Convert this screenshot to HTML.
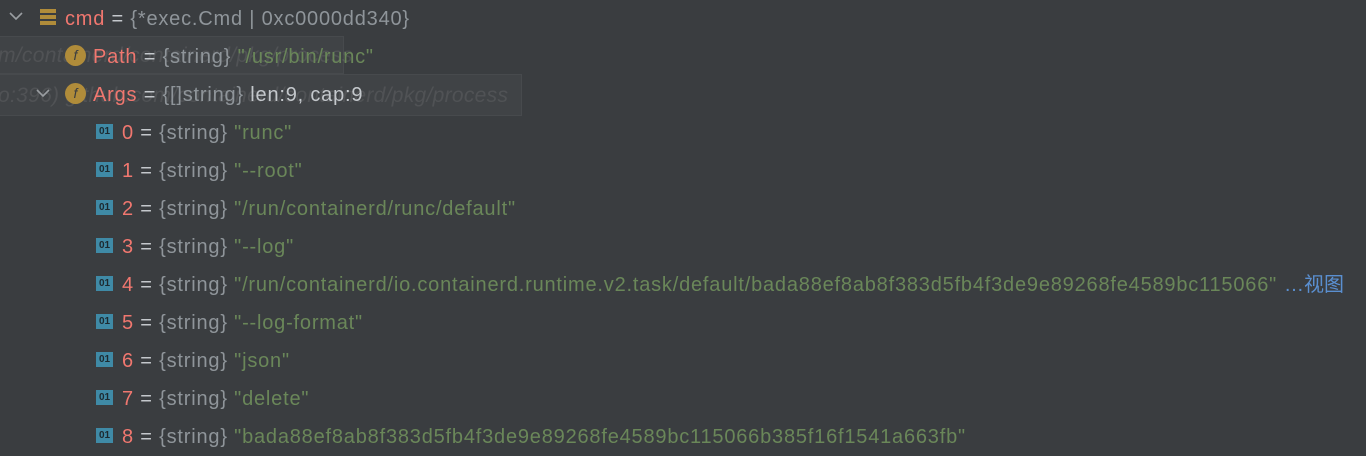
<!DOCTYPE html>
<html><head><meta charset="utf-8"><style>
body{margin:0;width:1366px;height:455px;background:#3a3d40;overflow:hidden;position:relative;font-family:"Liberation Sans","Noto Sans CJK SC",sans-serif;font-size:20px;letter-spacing:0.8px}
.row{position:absolute;height:38px;line-height:38px;white-space:nowrap}
.n{color:#f0776f}.e{color:#c4c8cc}.t{color:#8f959a}.s{color:#6a8759}.l{color:#c4c8cc}
.ic01{display:inline-block;width:17px;height:15px;background:#3f8aa6;color:#1d2a30;font-size:10px;letter-spacing:0;font-weight:bold;line-height:15px;text-align:center;vertical-align:middle;margin-right:9px;position:relative;top:-2px}
.f{position:absolute;width:21px;height:21px;border-radius:50%;background:#b08c3a;color:#3a3d40;font-size:14px;letter-spacing:0;text-align:center;line-height:21px;font-style:italic}
.ghost{position:absolute;background:rgba(255,255,255,0.03);border:1px solid rgba(255,255,255,0.04)}
.gt{position:absolute;color:rgba(200,200,200,0.12);font-style:italic;font-size:21px;letter-spacing:0.3px;white-space:nowrap}
</style></head><body>
<div class="ghost" style="left:-2px;top:36px;width:344px;height:36px"></div>
<div class="ghost" style="left:-2px;top:74px;width:522px;height:40px"></div>
<div class="gt" style="left:-2px;top:44px">m/containerd/containerd/pkg/process</div>
<div class="gt" style="left:-2px;top:84px">o:396) github.com/containerd/containerd/pkg/process</div>

<svg style="position:absolute;left:9px;top:11px" width="14" height="10"><path d="M1 2 L7 8 L13 2" stroke="#9a9ea2" stroke-width="1.6" fill="none"/></svg>
<div style="position:absolute;left:40px;top:9px;width:16px;height:4px;background:#b08c3a;box-shadow:0 6px 0 #b08c3a,0 12px 0 #b08c3a"></div>
<div class="row" style="left:65px;top:0px"><span class="n">cmd</span> <span class="e">=</span> <span class="t">{*exec.Cmd | 0xc0000dd340}</span></div>

<div class="f" style="left:65px;top:45px">f</div>
<div class="row" style="left:93px;top:38px"><span class="n">Path</span> <span class="e">=</span> <span class="t">{string}</span> <span class="s">"/usr/bin/runc"</span></div>

<svg style="position:absolute;left:36px;top:88px" width="14" height="10"><path d="M1 2 L7 8 L13 2" stroke="#9a9ea2" stroke-width="1.6" fill="none"/></svg>
<div class="f" style="left:65px;top:83px">f</div>
<div class="row" style="left:93px;top:76px"><span class="n">Args</span> <span class="e">=</span> <span class="t">{[]string}</span> <span class="l">len:9, cap:9</span></div>

<div class="row" style="left:96px;top:114px"><span class="ic01">01</span><span class="n">0</span> <span class="e">=</span> <span class="t">{string}</span> <span class="s">"runc"</span></div>
<div class="row" style="left:96px;top:152px"><span class="ic01">01</span><span class="n">1</span> <span class="e">=</span> <span class="t">{string}</span> <span class="s">"--root"</span></div>
<div class="row" style="left:96px;top:190px"><span class="ic01">01</span><span class="n">2</span> <span class="e">=</span> <span class="t">{string}</span> <span class="s">"/run/containerd/runc/default"</span></div>
<div class="row" style="left:96px;top:228px"><span class="ic01">01</span><span class="n">3</span> <span class="e">=</span> <span class="t">{string}</span> <span class="s">"--log"</span></div>
<div class="row" style="left:96px;top:266px"><span class="ic01">01</span><span class="n">4</span> <span class="e">=</span> <span class="t">{string}</span> <span class="s">"/run/containerd/io.containerd.runtime.v2.task/default/bada88ef8ab8f383d5fb4f3de9e89268fe4589bc115066"</span></div>
<div class="row" style="left:1284px;top:266px;color:#5a8fd0;letter-spacing:0">…视图</div>
<div class="row" style="left:96px;top:304px"><span class="ic01">01</span><span class="n">5</span> <span class="e">=</span> <span class="t">{string}</span> <span class="s">"--log-format"</span></div>
<div class="row" style="left:96px;top:342px"><span class="ic01">01</span><span class="n">6</span> <span class="e">=</span> <span class="t">{string}</span> <span class="s">"json"</span></div>
<div class="row" style="left:96px;top:380px"><span class="ic01">01</span><span class="n">7</span> <span class="e">=</span> <span class="t">{string}</span> <span class="s">"delete"</span></div>
<div class="row" style="left:96px;top:418px"><span class="ic01">01</span><span class="n">8</span> <span class="e">=</span> <span class="t">{string}</span> <span class="s">"bada88ef8ab8f383d5fb4f3de9e89268fe4589bc115066b385f16f1541a663fb"</span></div>
</body></html>
